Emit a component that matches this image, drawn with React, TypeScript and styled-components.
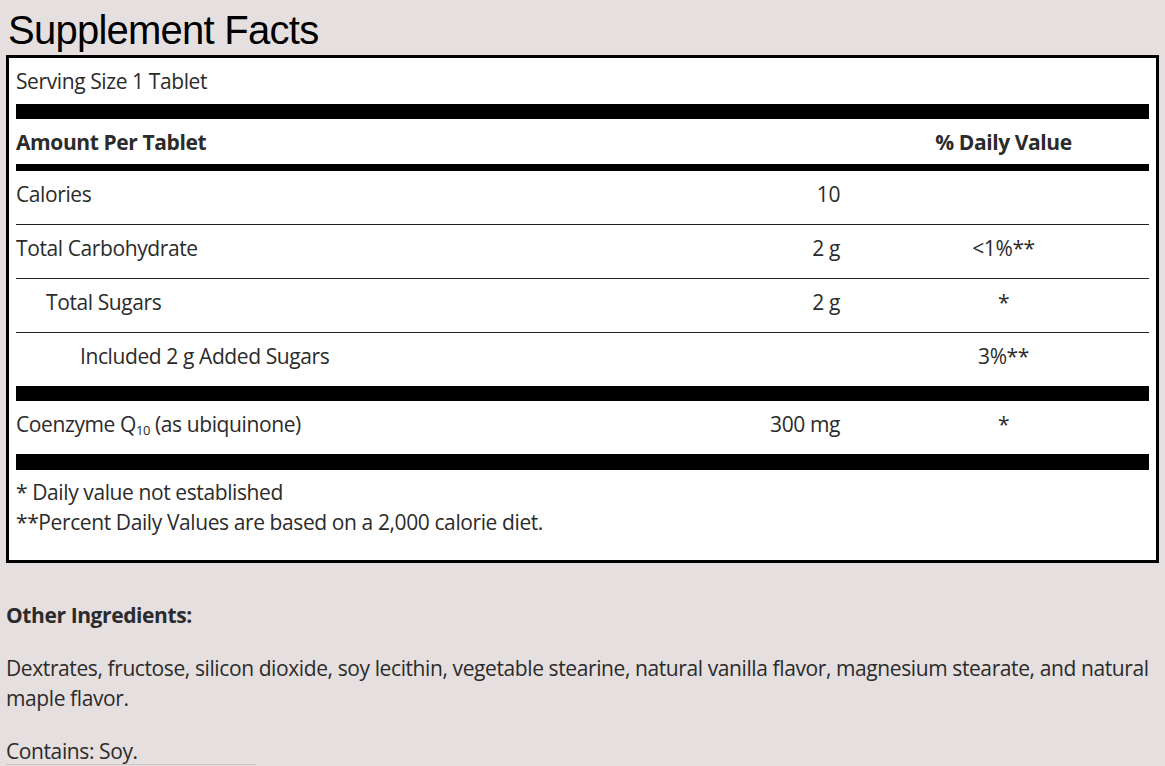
import React from 'react'
import styled, { createGlobalStyle } from 'styled-components'

const GlobalStyle = createGlobalStyle`
  html, body {
    margin: 0;
    padding: 0;
    background: #e5dfdf;
  }
  body {
    font-family: "Open Sans", Lato, "Liberation Sans", sans-serif;
    color: #2b2b2b;
  }
`

const Page = styled.div`
  padding: 0 6px;
  font-size: 21px;
  letter-spacing: -0.4px;
`

const Heading = styled.h1`
  margin: 10px 0 5px 2px;
  font-family: "Liberation Sans", Arial, sans-serif;
  font-weight: normal;
  font-size: 40px;
  line-height: 40px;
  letter-spacing: -0.75px;
  color: #000;
`

const Box = styled.div`
  background: #fff;
  border: 3px solid #000;
  padding: 0 7px;
`

const Serving = styled.div`
  height: 46px;
  display: flex;
  align-items: center;
`

const Bar = styled.div<{ $h: number }>`
  height: ${p => p.$h}px;
  background: #000;
`

const Row = styled.div<{ $indent?: number; $lined?: boolean }>`
  display: grid;
  grid-template-columns: 1fr 150px 291px;
  align-items: center;
  height: ${p => (p.$lined ? 54 : 53)}px;
  padding-bottom: 7px;
  box-sizing: border-box;
  border-bottom: ${p => (p.$lined ? '1px solid #222' : 'none')};
  & > span:first-child {
    padding-left: ${p => p.$indent || 0}px;
  }
`

const HeadRow = styled(Row)`
  height: 45px;
  padding-bottom: 0;
  font-weight: bold;
`

const Amount = styled.span`
  text-align: right;
  padding-right: 18px;
`

const Daily = styled.span`
  text-align: center;
`

const Sub = styled.sub`
  font-size: 13px;
  vertical-align: -3px;
  line-height: 0;
`

const Notes = styled.div`
  padding: 7px 0 23px;
  line-height: 30px;
`

const Section = styled.div`
  margin-top: 37px;
  line-height: 30px;
`

const Para = styled.p<{ $bold?: boolean }>`
  margin: 0 0 23px;
  font-weight: ${p => (p.$bold ? 'bold' : 'normal')};
  &:last-of-type {
    margin-bottom: 0;
  }
`

const Divider = styled.div`
  width: 250px;
  margin-top: -2px;
  border-top: 1px solid #c9c3c3;
`

type Nutrient = { name: React.ReactNode; amount?: string; dv?: string; indent?: number }

const carbs: Nutrient[] = [
  { name: 'Calories', amount: '10' },
  { name: 'Total Carbohydrate', amount: '2 g', dv: '<1%**' },
  { name: 'Total Sugars', amount: '2 g', dv: '*', indent: 30 },
  { name: 'Included 2 g Added Sugars', dv: '3%**', indent: 64 },
]

export default function App() {
  return (
    <>
      <GlobalStyle />
      <Page>
        <Heading>Supplement Facts</Heading>
        <Box>
          <Serving>Serving Size 1 Tablet</Serving>
          <Bar $h={15} />
          <HeadRow>
            <span>Amount Per Tablet</span>
            <Amount />
            <Daily>% Daily Value</Daily>
          </HeadRow>
          <Bar $h={7} />
          {carbs.map((n, i) => (
            <Row key={i} $indent={n.indent} $lined={i < carbs.length - 1}>
              <span>{n.name}</span>
              <Amount>{n.amount}</Amount>
              <Daily>{n.dv}</Daily>
            </Row>
          ))}
          <Bar $h={15} />
          <Row>
            <span>
              Coenzyme Q<Sub>10</Sub> (as ubiquinone)
            </span>
            <Amount>300 mg</Amount>
            <Daily>*</Daily>
          </Row>
          <Bar $h={16} />
          <Notes>
            <div>* Daily value not established</div>
            <div>**Percent Daily Values are based on a 2,000 calorie diet.</div>
          </Notes>
        </Box>
        <Section>
          <Para $bold>Other Ingredients:</Para>
          <Para>
            Dextrates, fructose, silicon dioxide, soy lecithin, vegetable stearine, natural vanilla flavor, magnesium
            stearate, and natural maple flavor.
          </Para>
          <Para>Contains: Soy.</Para>
        </Section>
        <Divider />
      </Page>
    </>
  )
}
